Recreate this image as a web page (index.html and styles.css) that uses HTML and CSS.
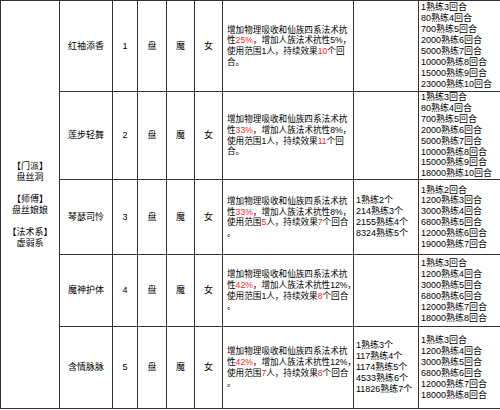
FILE: index.html
```html
<!DOCTYPE html>
<html>
<head>
<meta charset="utf-8">
<link rel="stylesheet" href="styles.css">
</head>
<body>
<table class="skills">
  <colgroup>
    <col class="c-school">
    <col class="c-name">
    <col class="c-no">
    <col class="c-a">
    <col class="c-b">
    <col class="c-c">
    <col class="c-desc">
    <col class="c-prof">
    <col class="c-turns">
  </colgroup>
  <tr class="r1">
    <td rowspan="5" class="school">【门派】<br>盘丝洞<br><br>【师傅】<br>盘丝娘娘<br><br>【法术系】<br>虚弱系</td>
    <td>红袖添香</td>
    <td>1</td>
    <td>盘</td>
    <td>魔</td>
    <td>女</td>
    <td class="desc">增加物理吸收和仙族四系法术抗<br>性<span class="red">25%</span>，增加人族法术抗性5%，<br>使用范围1人，持续效果<span class="red">10</span>个回<br>合。</td>
    <td class="list"></td>
    <td class="list">1熟练3回合<br>80熟练4回合<br>700熟练5回合<br>2000熟练6回合<br>5000熟练7回合<br>10000熟练8回合<br>15000熟练9回合<br>23000熟练10回合</td>
  </tr>
  <tr class="r2">
    <td>莲步轻舞</td>
    <td>2</td>
    <td>盘</td>
    <td>魔</td>
    <td>女</td>
    <td class="desc">增加物理吸收和仙族四系法术抗<br>性<span class="red">33%</span>，增加人族法术抗性8%，<br>使用范围1人，持续效果<span class="red">11</span>个回<br>合。</td>
    <td class="list"></td>
    <td class="list">1熟练3回合<br>80熟练4回合<br>700熟练5回合<br>2000熟练6回合<br>5000熟练7回合<br>10000熟练8回合<br>15000熟练9回合<br>18000熟练10回合</td>
  </tr>
  <tr class="r3">
    <td>琴瑟司怜</td>
    <td>3</td>
    <td>盘</td>
    <td>魔</td>
    <td>女</td>
    <td class="desc">增加物理吸收和仙族四系法术抗<br>性<span class="red">33%</span>，增加人族法术抗性8%，<br>使用范围<span class="red">5</span>人，持续效果<span class="red">7</span>个回合<br>。</td>
    <td class="list">1熟练2个<br>214熟练3个<br>2155熟练4个<br>8324熟练5个</td>
    <td class="list">1熟练2回合<br>1200熟练3回合<br>3000熟练4回合<br>6800熟练5回合<br>12000熟练6回合<br>19000熟练7回合</td>
  </tr>
  <tr class="r4">
    <td>魔神护体</td>
    <td>4</td>
    <td>盘</td>
    <td>魔</td>
    <td>女</td>
    <td class="desc">增加物理吸收和仙族四系法术抗<br>性<span class="red">42%</span>，增加人族法术抗性12%，<br>使用范围1人，持续效果<span class="red">8</span>个回合<br>。</td>
    <td class="list"></td>
    <td class="list">1熟练3回合<br>1200熟练4回合<br>3000熟练5回合<br>6800熟练6回合<br>12000熟练7回合<br>18000熟练8回合</td>
  </tr>
  <tr class="r5">
    <td>含情脉脉</td>
    <td>5</td>
    <td>盘</td>
    <td>魔</td>
    <td>女</td>
    <td class="desc">增加物理吸收和仙族四系法术抗<br>性<span class="red">42%</span>，增加人族法术抗性12%，<br>使用范围<span class="red">7</span>人，持续效果<span class="red">8</span>个回合<br>。</td>
    <td class="list">1熟练3个<br>117熟练4个<br>1174熟练5个<br>4533熟练6个<br>11826熟练7个</td>
    <td class="list">1熟练3回合<br>1200熟练4回合<br>3000熟练5回合<br>6800熟练6回合<br>12000熟练7回合<br>18000熟练8回合</td>
  </tr>
</table>
</body>
</html>
```

FILE: styles.css
```css
html, body {
  margin: 0;
  padding: 0;
  background: #ffffff;
}

.skills {
  width: 500px;
  table-layout: fixed;
  border-collapse: collapse;
  font-family: "Liberation Sans", "Noto Sans CJK SC", sans-serif;
  font-size: 9px;
  line-height: 11px;
  color: #000;
}

.skills td {
  border: 1px solid #333;
  padding: 0;
  text-align: center;
  vertical-align: middle;
  white-space: nowrap;
}

.c-school { width: 59px; }
.c-name { width: 53px; }
.c-no { width: 25px; }
.c-a { width: 29px; }
.c-b { width: 28px; }
.c-c { width: 28px; }
.c-desc { width: 131px; }
.c-prof { width: 65px; }
.c-turns { width: 82px; }

.r1 { height: 91px; }
.r2 { height: 88px; }
.r3 { height: 75px; }
.r4 { height: 72px; }
.r5 { height: 82px; }

.skills td.desc {
  text-align: left;
  padding-left: 4px;
  font-size: 8.6px;
  line-height: 10.7px;
}

.skills td.list {
  text-align: left;
  padding-left: 2px;
  line-height: 10.9px;
}

.red {
  color: #ff2020;
}
```
